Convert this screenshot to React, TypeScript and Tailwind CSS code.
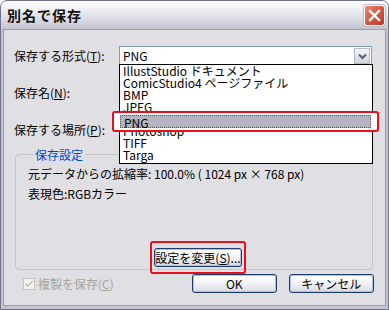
import { Check } from 'lucide-react';

const font = { fontFamily: '"MS UI Gothic", "Noto Sans CJK JP", sans-serif' };

const formats = [
    'IllustStudio ドキュメント',
    'ComicStudio4 ページファイル',
    'BMP',
    'JPEG',
    'PNG',
    'Photoshop',
    'TIFF',
    'Targa',
];

const XpButton = ({ label, className = '' }: { label: React.ReactNode; className?: string }) => (
    <button
        className={`h-[19px] rounded-[3px] border border-[#1d3b6f] bg-gradient-to-b from-white via-[#f3f3f6] to-[#d8d8e2] text-[12px] leading-none text-black shadow-[inset_0_0_0_1px_#a9c3eb] ${className}`}
    >
        {label}
    </button>
);

const App = () => {
    return (
        <div className="relative w-[389px] h-[310px] overflow-hidden text-[12px] text-black" style={font}>
            <div className="flex flex-col w-full h-full rounded-t-[7px] border border-[#71718c] bg-[#c4c4d2]">
                {/* title bar */}
                <div className="flex items-center justify-between h-[28px] pl-[6px] pr-[3px] rounded-t-[6px] bg-gradient-to-b from-[#fdfdfe] via-[#e4e4ec] to-[#c5c5d3]">
                    <span className="text-[14px] font-bold tracking-[1px] text-[#111]">別名で保存</span>
                    <div className="flex items-center justify-center w-[21px] h-[21px] rounded-[3px] border border-white bg-gradient-to-br from-[#e8846f] via-[#d55a44] to-[#b83a2a] shadow-[0_0_0_1px_#b8b8c8]">
                        <svg width="13" height="13" viewBox="0 0 13 13">
                            <path d="M2 2 L11 11 M11 2 L2 11" stroke="white" strokeWidth="2.4" strokeLinecap="square" />
                        </svg>
                    </div>
                </div>

                {/* client area */}
                <div className="flex-1 mx-[2px] mb-[3px] border border-[#9c9cb0] bg-[#e0dfe3] px-[10px] pt-[16px]">
                    <div className="flex flex-col gap-[17px]">
                        <div className="flex items-center h-[20px]">
                            <span className="w-[105px]">保存する形式(<u>T</u>):</span>
                            <div className="flex items-center justify-between w-[253px] h-[20px] border border-[#7f9db9] bg-white pl-[3px] pr-[1px]">
                                <span>PNG</span>
                                <div className="flex items-center justify-center w-[16px] h-[16px] border border-[#b6bccc] bg-gradient-to-b from-[#f4f4f7] to-[#d4d4de]">
                                    <svg width="9" height="7" viewBox="0 0 9 7">
                                        <path d="M1 1.5 L4.5 5 L8 1.5" stroke="#4d6185" strokeWidth="2" fill="none" />
                                    </svg>
                                </div>
                            </div>
                        </div>
                        <div className="flex items-center h-[20px]">
                            <span>保存名(<u>N</u>):</span>
                        </div>
                        <div className="flex items-center h-[20px]">
                            <span>保存する場所(<u>P</u>):</span>
                        </div>
                    </div>

                    <fieldset className="mt-[8px] ml-[1px] w-[358px] h-[122px] rounded-[4px] border border-[#c5c4cc] px-[12px]">
                        <legend className="ml-[5px] px-[2px] text-[#0046d5] leading-[13px]">保存設定</legend>
                        <div className="pt-[3px] leading-[20px]">
                            <div>元データからの拡縮率: 100.0% ( 1024 px × 768 px)</div>
                            <div>表現色:RGBカラー</div>
                        </div>
                        <div className="mt-[37px] ml-[122px] inline-flex rounded-[3px] border-2 border-[#e8101a] px-[2px] pt-[5px] pb-[5px]">
                            <XpButton label={<>設定を変更(<u>S</u>)...</>} className="w-[88px]" />
                        </div>
                    </fieldset>

                    <div className="flex items-center mt-[4px]">
                        <div className="flex items-center gap-[3px] ml-[9px] text-[#a6a59f]">
                            <div className="flex items-center justify-center w-[12px] h-[12px] border border-[#c6c5bf] bg-[#f3f2ee]">
                                <Check size={10} strokeWidth={3} className="text-[#bab9b2]" />
                            </div>
                            <span>複製を保存(<u>C</u>)</span>
                        </div>
                        <XpButton label="OK" className="w-[85px] ml-[78px]" />
                        <XpButton label="キャンセル" className="w-[85px] ml-[12px]" />
                    </div>
                </div>
            </div>

            {/* open dropdown list */}
            <div className="absolute left-[119px] top-[64px] w-[254px] h-[100px] border border-black bg-white">
                {formats.map((f) => (
                    <div
                        key={f}
                        className={`h-[12px] leading-[12px] pl-[3px] whitespace-nowrap ${f === 'PNG' ? 'bg-[#b3b4bf]' : ''}`}
                    >
                        {f}
                    </div>
                ))}
            </div>

            {/* highlight annotation over PNG */}
            <div className="absolute left-[112px] top-[111px] w-[267px] h-[21px] rounded-[3px] border-2 border-[#e8101a] bg-white px-[6px] py-[2px]">
                <div className="h-[13px] leading-[13px] pl-[3px] bg-[#b3b4bf] border border-dotted border-[#55565e]">PNG</div>
            </div>
        </div>
    );
};

export default App;
